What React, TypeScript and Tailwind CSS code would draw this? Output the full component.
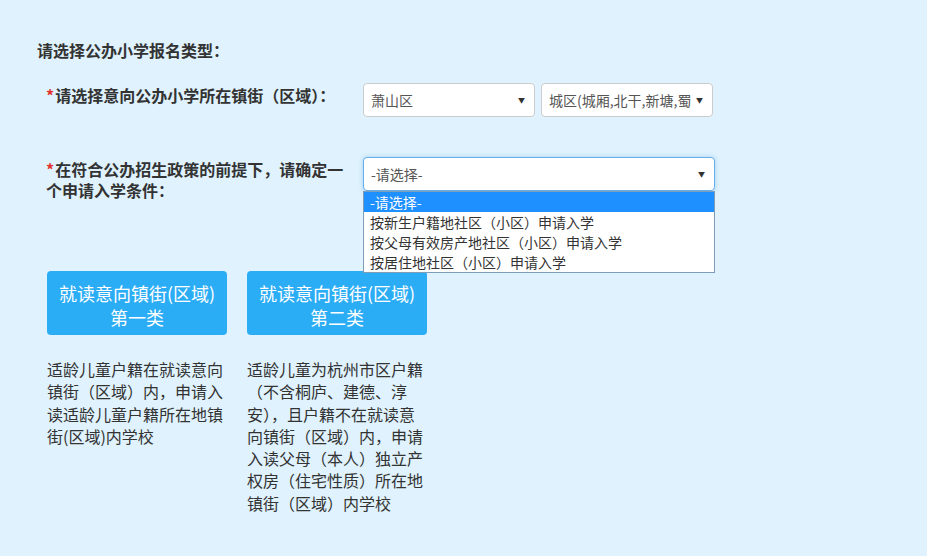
import React from 'react';

const options = [
  '-请选择-',
  '按新生户籍地社区（小区）申请入学',
  '按父母有效房产地社区（小区）申请入学',
  '按居住地社区（小区）申请入学',
];

function Arrow() {
  return <span className="absolute right-[9px] top-1/2 -translate-y-1/2 text-[7px] leading-none text-[#333]">▼</span>;
}

function App() {
  return (
    <div className="min-h-screen w-full bg-[#dff2fd] font-['Noto_Sans_CJK_SC',sans-serif] text-[#333]">
      <div className="pl-[37px] pt-[39px]">
        {/* 标题 */}
        <div className="text-[16px] font-bold leading-[22px]">请选择公办小学报名类型：</div>

        {/* 镇街选择 */}
        <div className="mt-[22px] flex items-start">
          <div className="w-[326px] pl-[9px] pt-[2px] text-[16px] font-bold leading-[21px]">
            <span className="mr-[1px] text-[#e5322d]">*</span>请选择意向公办小学所在镇街（区域）：
          </div>
          <div className="flex gap-[6px]">
            <div className="relative flex h-[34px] w-[172px] items-center rounded-[4px] border border-[#ccc] bg-white pl-[7px] text-[14px] text-[#555]">
              萧山区
              <Arrow />
            </div>
            <div className="relative flex h-[34px] w-[172px] items-center rounded-[4px] border border-[#ccc] bg-white pl-[7px] text-[14px] text-[#555]">
              <span className="w-[142px] overflow-hidden whitespace-nowrap">城区(城厢,北干,新塘,蜀山,闻堰)</span>
              <Arrow />
            </div>
          </div>
        </div>

        {/* 入学条件 */}
        <div className="mt-[40px] flex items-start">
          <div className="w-[326px] pl-[9px] pt-[2px]">
            <div className="w-[300px] text-[16px] font-bold leading-[21px]">
              <span className="mr-[1px] text-[#e5322d]">*</span>在符合公办招生政策的前提下，请确定一个申请入学条件：
            </div>
          </div>
          <div className="relative w-[352px]">
            <div className="relative flex h-[34px] items-center rounded-[4px] border border-[#66afe9] bg-white pl-[7px] text-[14px] text-[#555] shadow-[0_0_4px_rgba(102,175,233,0.5)]">
              -请选择-
              <Arrow />
            </div>
            <div className="absolute left-0 top-[34px] z-10 w-full border border-[#7f9db9] bg-white">
              {options.map((o, i) => (
                <div
                  key={o}
                  className={
                    i === 0
                      ? 'h-[20px] bg-[#1e90ff] pl-[6px] text-[14px] leading-[20px] text-white'
                      : 'h-[20px] pl-[6px] text-[14px] leading-[20px] text-[#333]'
                  }
                >
                  {o}
                </div>
              ))}
            </div>
          </div>
        </div>

        {/* 类别 */}
        <div className="mt-[70px] flex gap-[20px] pl-[10px]">
          <div className="w-[180px]">
            <div className="h-[64px] rounded-[4px] bg-[#2badf6] pt-[10px] text-center text-[18px] leading-[24px] text-white">
              就读意向镇街(区域)
              <br />
              第一类
            </div>
            <div className="mt-[23px] text-[16px] leading-[22.3px] text-[#333]">
              适龄儿童户籍在就读意向镇街（区域）内，申请入读适龄儿童户籍所在地镇街(区域)内学校
            </div>
          </div>
          <div className="w-[180px]">
            <div className="h-[64px] rounded-[4px] bg-[#2badf6] pt-[10px] text-center text-[18px] leading-[24px] text-white">
              就读意向镇街(区域)
              <br />
              第二类
            </div>
            <div className="mt-[23px] text-[16px] leading-[22.3px] text-[#333]">
              适龄儿童为杭州市区户籍（不含桐庐、建德、淳安），且户籍不在就读意向镇街（区域）内，申请入读父母（本人）独立产权房（住宅性质）所在地镇街（区域）内学校
            </div>
          </div>
        </div>
      </div>
    </div>
  );
}

export default App;
